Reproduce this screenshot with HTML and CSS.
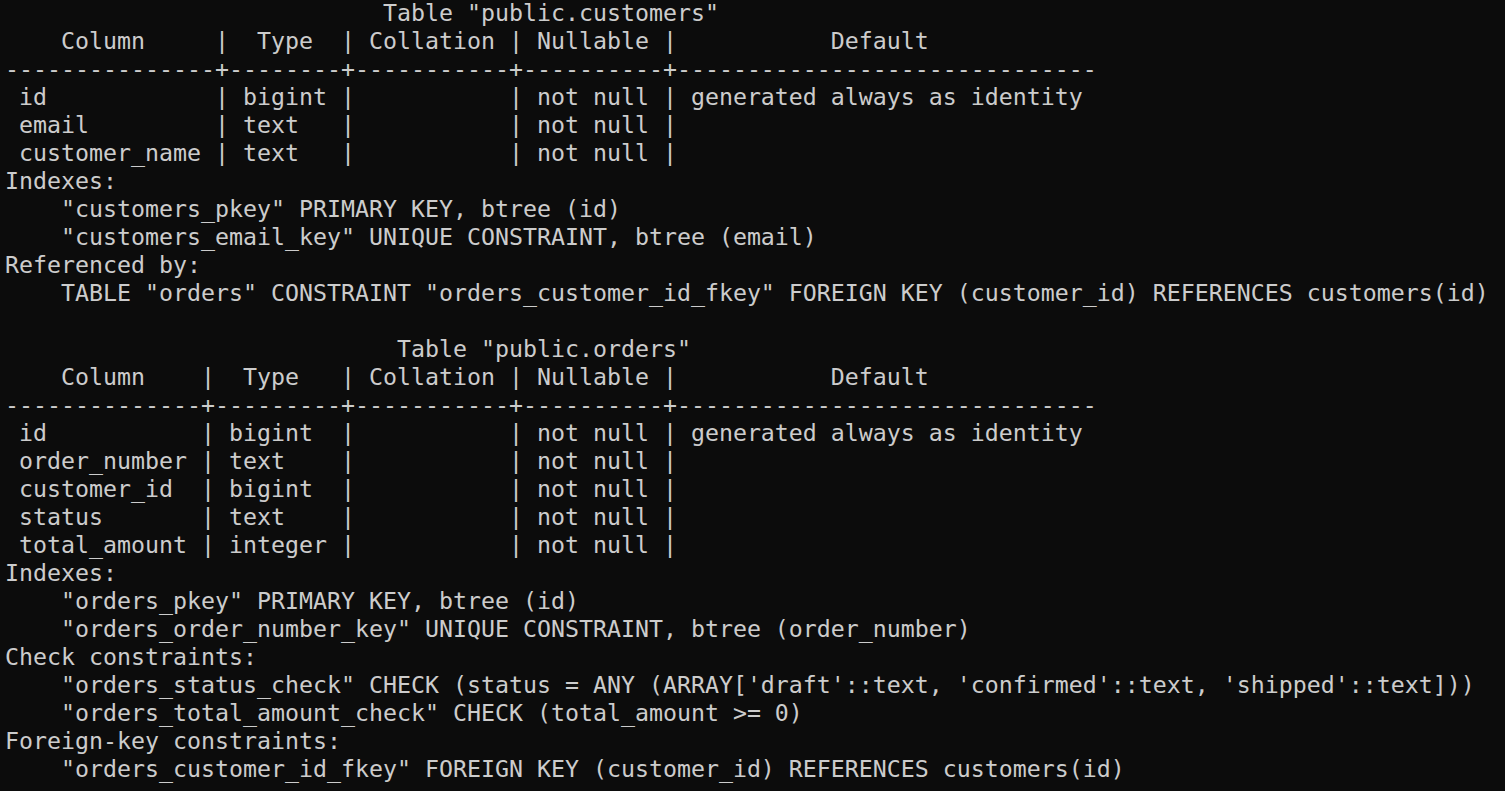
FILE: index.html
```html
<!DOCTYPE html>
<html lang="en">
<head>
<meta charset="utf-8">
<title>psql</title>
<link rel="stylesheet" href="styles.css">
</head>
<body>
<main class="terminal">
<pre class="output">                           Table "public.customers"
    Column     |  Type  | Collation | Nullable |           Default
---------------+--------+-----------+----------+------------------------------
 id            | bigint |           | not null | generated always as identity
 email         | text   |           | not null |
 customer_name | text   |           | not null |
Indexes:
    "customers_pkey" PRIMARY KEY, btree (id)
    "customers_email_key" UNIQUE CONSTRAINT, btree (email)
Referenced by:
    TABLE "orders" CONSTRAINT "orders_customer_id_fkey" FOREIGN KEY (customer_id) REFERENCES customers(id)

                            Table "public.orders"
    Column    |  Type   | Collation | Nullable |           Default
--------------+---------+-----------+----------+------------------------------
 id           | bigint  |           | not null | generated always as identity
 order_number | text    |           | not null |
 customer_id  | bigint  |           | not null |
 status       | text    |           | not null |
 total_amount | integer |           | not null |
Indexes:
    "orders_pkey" PRIMARY KEY, btree (id)
    "orders_order_number_key" UNIQUE CONSTRAINT, btree (order_number)
Check constraints:
    "orders_status_check" CHECK (status = ANY (ARRAY['draft'::text, 'confirmed'::text, 'shipped'::text]))
    "orders_total_amount_check" CHECK (total_amount >= 0)
Foreign-key constraints:
    "orders_customer_id_fkey" FOREIGN KEY (customer_id) REFERENCES customers(id)</pre>
</main>
</body>
</html>
```

FILE: styles.css
```css
html, body {
  margin: 0;
  padding: 0;
  background: #0c0c0c;
  height: 100%;
  overflow: hidden;
}

.terminal {
  background: #0c0c0c;
  color: #cccccc;
  min-height: 100%;
  padding: 0 0 0 5px;
}

.output {
  margin: -1px 0 0 0;
  font-family: "DejaVu Sans Mono", "Liberation Mono", monospace;
  font-size: 23.25px;
  line-height: 28px;
  white-space: pre;
  color: #cccccc;
}
```
